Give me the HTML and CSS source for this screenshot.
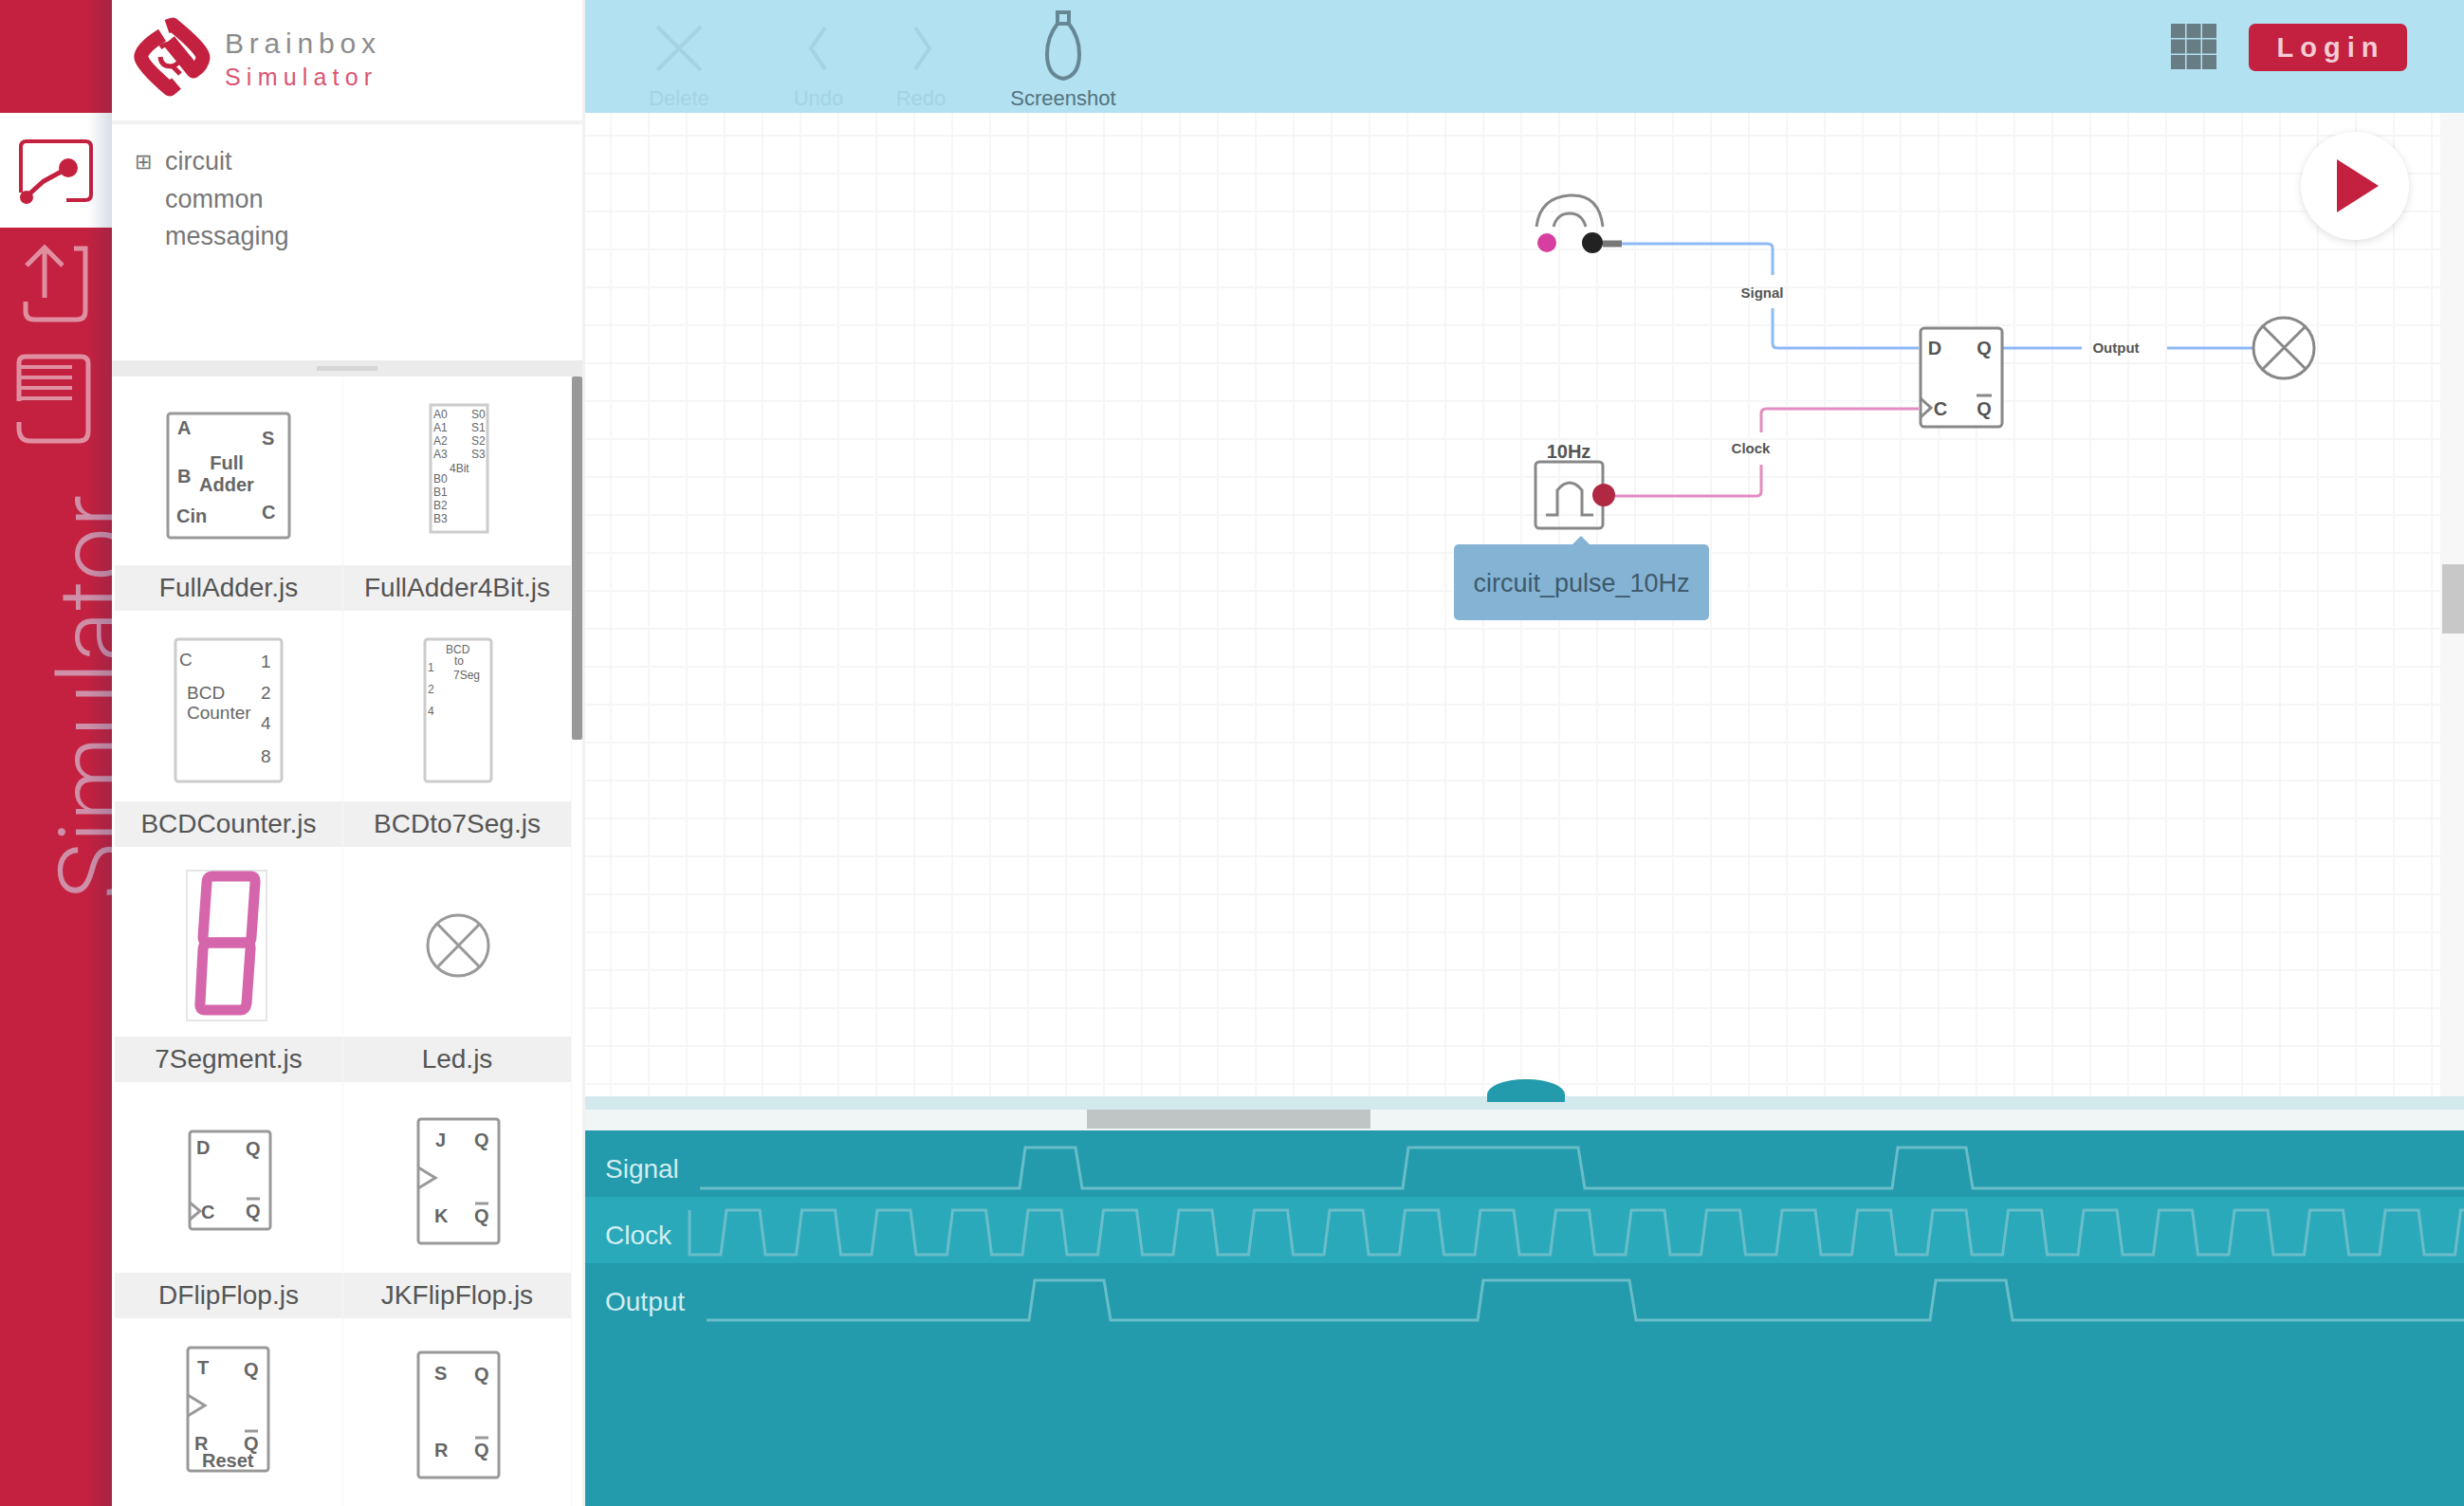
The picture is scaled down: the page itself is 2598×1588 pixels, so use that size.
FILE: index.html
```html
<!DOCTYPE html>
<html lang="en">
<head>
<meta charset="utf-8">
<title>Brainbox Simulator</title>
<link rel="stylesheet" href="styles.css">
</head>
<body>
<div class="app">
  <nav class="rail">
    <div class="rail-top"></div>
    <div class="tab active">
      <svg viewBox="0 0 118 121" fill="none" stroke="#c3213f" stroke-width="4"><path d="M22 84V36q0-6 6-6h62q6 0 6 6v50q0 6-6 6H70"/><path d="M26 90 46 72l26-14" stroke-width="5"/><circle cx="72" cy="58" r="8" fill="#c3213f"/><circle cx="28" cy="89" r="5" fill="#c3213f"/></svg>
    </div>
    <div class="tab">
      <svg viewBox="0 0 118 121" fill="none" stroke="#e08fa1" stroke-width="5"><path d="M78 22h12v66q0 9-9 9H36q-9 0-9-9V78"/><path d="M47 74V22M28 40l19-19 19 19"/></svg>
    </div>
    <div class="tab">
      <svg viewBox="0 0 118 121" fill="none" stroke="#e08fa1" stroke-width="5"><path d="M20 62V21q0-6 7-6h58q8 0 8 7v72q0 10-10 10H32q-12 0-12-14V84"/><path d="M20 26h56M20 37h56M20 48h56M20 59h56" stroke-width="4"/></svg>
    </div>
    <div class="rail-title"><span>Simulator</span></div>
  </nav>

  <aside class="palette">
    <header class="brand">
      <svg class="logo" viewBox="0 0 84 90"><g fill="none" stroke="#c3213f" stroke-width="15" stroke-linejoin="round"><path d="M32 22Q8 37 10 46T40 79L47 73"/><path d="M37 13 43 11Q76 38 75 46T65 60L39 28"/></g><path d="M30 35q13-9 19 4t-8 16q-10 0-11-10M42 54l9 9" fill="none" stroke="#c3213f" stroke-width="5"/></svg>
      <div class="brand-text"><b>Brainbox</b><i>Simulator</i></div>
    </header>
    <ul class="tree">
      <li><span class="mark">⊞</span>circuit</li>
      <li><span class="mark"></span>common</li>
      <li><span class="mark"></span>messaging</li>
    </ul>
    <div class="splitter"><span></span></div>
    <div class="parts">
      <div class="grid">
        <figure><svg viewBox="0 0 241 199"><rect x="56" y="39" width="128" height="131" rx="3"/><g class="pin"><text x="66" y="61">A</text><text x="66" y="112">B</text><text x="65" y="154">Cin</text><text x="155" y="72">S</text><text x="155" y="150">C</text><text x="118" y="98" text-anchor="middle">Full</text><text x="118" y="121" text-anchor="middle">Adder</text></g></svg><figcaption>FullAdder.js</figcaption></figure>
        <figure><svg viewBox="0 0 241 199"><rect class="soft" x="92" y="30" width="60" height="134"/><g class="tiny"><text x="95" y="44">A0</text><text x="95" y="58">A1</text><text x="95" y="72">A2</text><text x="95" y="86">A3</text><text x="95" y="112">B0</text><text x="95" y="126">B1</text><text x="95" y="140">B2</text><text x="95" y="154">B3</text><text x="135" y="44">S0</text><text x="135" y="58">S1</text><text x="135" y="72">S2</text><text x="135" y="86">S3</text><text x="112" y="101">4Bit</text></g></svg><figcaption>FullAdder4Bit.js</figcaption></figure>
        <figure><svg viewBox="0 0 241 199"><rect class="soft" x="64" y="28" width="112" height="150" rx="3"/><g class="small"><text x="68" y="56">C</text><text x="76" y="91">BCD</text><text x="76" y="112">Counter</text><text x="154" y="58">1</text><text x="154" y="91">2</text><text x="154" y="123">4</text><text x="154" y="158">8</text></g></svg><figcaption>BCDCounter.js</figcaption></figure>
        <figure><svg viewBox="0 0 241 199"><rect class="soft" x="86" y="28" width="70" height="150" rx="3"/><g class="tiny"><text x="108" y="43">BCD</text><text x="117" y="55">to</text><text x="116" y="70">7Seg</text><text x="89" y="62">1</text><text x="89" y="85">2</text><text x="89" y="108">4</text></g></svg><figcaption>BCDto7Seg.js</figcaption></figure>
        <figure><svg viewBox="0 0 241 199"><rect class="faint" x="76" y="24" width="84" height="158"/><g class="seg"><path d="M103 30h40q6 0 5 7l-4 57q0 6-6 6H99q-6 0-6-6l4-57q0-7 6-7z"/><path d="M99 100h39q6 0 5 7l-4 57q-1 7-7 7H95q-6 0-5-7l3-57q1-7 6-7z"/></g></svg><figcaption>7Segment.js</figcaption></figure>
        <figure><svg viewBox="0 0 241 199"><circle cx="121" cy="103" r="32"/><path d="m99 80 45 46m0-46-45 46"/></svg><figcaption>Led.js</figcaption></figure>
        <figure><svg viewBox="0 0 241 199"><rect x="79" y="50" width="85" height="103" rx="3"/><g class="pin"><text x="86" y="74">D</text><text x="138" y="75">Q</text><text x="91" y="142">C</text><text x="138" y="141">Q</text></g><path d="m79 125 11 9-11 9M139 121h14"/></svg><figcaption>DFlipFlop.js</figcaption></figure>
        <figure><svg viewBox="0 0 241 199"><rect x="79" y="37" width="85" height="131" rx="3"/><g class="pin"><text x="97" y="66">J</text><text x="96" y="146">K</text><text x="138" y="66">Q</text><text x="138" y="146">Q</text></g><path d="m79 88 18 11-18 11M139 126h14"/></svg><figcaption>JKFlipFlop.js</figcaption></figure>
        <figure><svg viewBox="0 0 241 199"><rect x="77" y="30" width="85" height="130" rx="3"/><g class="pin"><text x="87" y="58">T</text><text x="136" y="60">Q</text><text x="84" y="138">R</text><text x="136" y="138">Q</text><text x="92" y="156">Reset</text></g><path d="m77 80 18 11-18 11M137 118h14"/></svg></figure>
        <figure><svg viewBox="0 0 241 199"><rect x="79" y="35" width="85" height="132" rx="3"/><g class="pin"><text x="96" y="64">S</text><text x="96" y="145">R</text><text x="138" y="65">Q</text><text x="138" y="145">Q</text></g><path d="M139 125h14"/></svg></figure>
      </div>
      <div class="bar"><span></span></div>
    </div>
  </aside>

  <main class="main">
    <header class="toolbar">
      <div class="tool off w1"><svg viewBox="0 0 84 90"><path d="m19 27 46 46m0-46L19 73"/></svg><span>Delete</span></div>
      <div class="tool off w2"><svg viewBox="0 0 84 90"><path d="M49 28 34 50l15 22"/></svg><span>Undo</span></div>
      <div class="tool off w3"><svg viewBox="0 0 84 90"><path d="m36 28 15 22-15 22"/></svg><span>Redo</span></div>
      <div class="tool w4"><svg viewBox="0 0 84 90"><path d="M36 12h12v12q11 14 11 32 0 23-17 26-17-3-17-26 0-18 11-32zM34 24h16"/></svg><span>Screenshot</span></div>
      <div class="spacer"></div>
      <svg class="apps" viewBox="0 0 48 48"><path d="M0 0h15v15H0zM16.5 0h15v15h-15zM33 0h15v15H33zM0 16.5h15v15H0zM16.5 16.5h15v15h-15zM33 16.5h15v15H33zM0 33h15v15H0zM16.5 33h15v15h-15zM33 33h15v15H33z" fill="#687c84"/></svg>
      <button class="login">Login</button>
    </header>
    <section class="canvas">
      <svg class="diagram" viewBox="617 118 1956 1037">
        <g fill="none" stroke-width="3">
          <path stroke="#8db9f7" d="M1700 256h164q5 0 5 5v28M1869 324v37q0 5 5 5h149M2112 366h83M2285 366h91"/>
          <path stroke="#e48cc0" d="M1692 522h160q5 0 5-5v-28M1857 455v-20q0-5 5-5h161"/>
        </g>
        <g class="node">
          <path d="M1620 238q4-31 35-33t35 33M1638 238q4-14 17-14t17 14"/>
          <path d="M1690 256h20" stroke-width="7" stroke="#777"/>
          <circle cx="1631" cy="255" r="10" fill="#d63f9f" stroke="none"/><circle cx="1679" cy="255" r="11" fill="#222" stroke="none"/>
          <rect x="1619" y="486" width="71" height="70" rx="4"/><path d="M1630 542h12v-26q13-16 26 0v26h12"/>
          <circle cx="1691" cy="521" r="12" fill="#b02842" stroke="none"/>
          <rect x="2025" y="345" width="86" height="104" rx="4" fill="#fff"/>
          <path d="m2025 419 11 10-11 10M2084 416h16"/>
          <circle cx="2408" cy="366" r="32" fill="#fff"/><path d="m2386 343 45 45m0-45-45 45"/>
        </g>
        <g class="wire-text"><text x="1858" y="313">Signal</text><text x="1846" y="477">Clock</text><text x="2231" y="371">Output</text><text x="1654" y="482" class="hz">10Hz</text><text x="2040" y="373" class="hz">D</text><text x="2092" y="373" class="hz">Q</text><text x="2046" y="437" class="hz">C</text><text x="2092" y="437" class="hz">Q</text></g>
      </svg>
      <div class="tip">circuit_pulse_10Hz</div>
      <div class="play"><svg viewBox="0 0 114 114"><path d="M38 29v56l44-28z" fill="#c3213f"/></svg></div>
      <div class="vbar"><span></span></div>
      <div class="handle"></div>
    </section>
    <div class="divider"></div>
    <div class="hbar"><span></span></div>
    <section class="scope">
      <div class="wave"><label>Signal</label><svg viewBox="617 1192 1981 70"><path d="M738 1253H1075L1081 1210H1134L1141 1253H1479L1485 1210H1664L1671 1253H1995L2001 1210H2073L2080 1253H2598"/></svg></div>
      <div class="wave alt"><label>Clock</label><svg viewBox="617 1262 1981 70"><path id="clock" d=""/></svg></div>
      <div class="wave"><label>Output</label><svg viewBox="617 1332 1981 70"><path d="M745 1392H1085L1091 1350H1164L1171 1392H1558L1564 1350H1718L1725 1392H2035L2041 1350H2115L2122 1392H2598"/></svg></div>
    </section>
  </main>
</div>
<script src="scope.js"></script>
</body>
</html>
```
FILE: scope.js
```js
let d = "M727 1276V1323";
for (let x = 763; x < 2600; x += 79.5) d += `H${x - 3}L${x + 3} 1276H${x + 38}L${x + 44} 1323`;
document.getElementById("clock").setAttribute("d", d);
```
FILE: styles.css
```css
* { box-sizing: border-box; }
body { margin: 0; font-family: "Liberation Sans", Arial, sans-serif; font-size: 27px; color: #777; background: #fff; }
.app { display: grid; grid-template-columns: 118px 499px 1fr; width: 2598px; height: 1588px; overflow: hidden; }

.rail { position: relative; display: flex; flex-direction: column; background: #c3213f; overflow: hidden; }
.rail::after { content: ""; position: absolute; inset: 0 0 0 auto; width: 26px; background: linear-gradient(90deg, rgba(10,50,100,0), rgba(10,50,100,.16)); }
.rail-top { height: 119px; }
.tab { height: 121px; }
.tab.active { background: #fff; }
.tab svg { display: block; width: 118px; height: 121px; }
.rail-title { flex: 1; padding: 40px 0 0 41px; }
.rail-title span { display: block; writing-mode: vertical-rl; transform: rotate(180deg); width: 116px; font: 300 101px/116px Roboto, sans-serif; color: #cf8fa8; }

.palette { display: flex; flex-direction: column; min-width: 0; height: 1588px; border-right: 3px solid #f1f1f1; }
.brand { display: flex; height: 131px; padding: 15px 0 0 21px; gap: 14px; border-bottom: 4px solid #f2f2f2; }
.logo { width: 84px; height: 90px; }
.brand-text { display: flex; flex-direction: column; padding-top: 15px; gap: 3px; line-height: 32px; }
.brand-text b { font-weight: 400; font-size: 30px; letter-spacing: 5.8px; color: #8c8c8c; }
.brand-text i { font-style: normal; font-size: 25px; letter-spacing: 6.2px; color: #dc5472; }
.tree { list-style: none; margin: 0; padding: 20px 0 0 24px; height: 249px; line-height: 39.7px; }
.tree li { display: flex; }
.mark { width: 32px; font-size: 22px; }
.splitter { display: flex; justify-content: center; align-items: center; height: 17px; background: #ebebeb; }
.splitter span { width: 64px; height: 5px; background: #d6d6d6; }
.parts { display: flex; flex: 1; min-height: 0; overflow: hidden; }
.grid { display: grid; grid-template-columns: 241px 241px; grid-auto-rows: 248.5px; flex: none; padding-left: 3px; width: 485px; }
.grid figure { margin: 0; border-right: 1px solid #f7f7f7; }
.grid svg { display: block; width: 241px; height: 199px; fill: none; stroke: #999; stroke-width: 3; }
.grid svg .soft { stroke: #ccc; }
.grid svg .faint { stroke: #e6e6e6; stroke-width: 2; }
.grid svg text { fill: #666; stroke: none; }
.pin { font-size: 20px; font-weight: bold; }
.small { font-size: 19px; }
.tiny { font-size: 12px; }
.seg { stroke: #d566ac; stroke-width: 11; }
figcaption { height: 48px; line-height: 48px; text-align: center; background: #f0f0f0; color: #555; font-size: 28px; }
.bar { flex: 1; }
.bar span { display: block; width: 11px; height: 383px; background: #999; border-radius: 2px; }

.main { display: flex; flex-direction: column; min-width: 0; }
.toolbar { display: flex; height: 119px; padding-right: 60px; background: #b2e1f1; }
.tool { display: flex; flex-direction: column; align-items: center; font-size: 22px; color: #53737e; }
.tool svg { width: 84px; height: 92px; fill: none; stroke: #668894; stroke-width: 4; }
.tool span { line-height: 24px; }
.off { color: #a5d3e4; }
.off svg { stroke: #a5d3e4; }
.w1 { width: 100px; margin-left: 49px; }
.w2 { width: 100px; margin-left: 47px; }
.w3 { width: 100px; margin-left: 8px; }
.w4 { width: 120px; margin-left: 40px; }
.spacer { flex: 1; }
.apps { width: 48px; height: 48px; margin: 25px 34px 0 0; }
.login { width: 167px; height: 50px; margin-top: 25px; padding: 0; border: 0; border-radius: 7px; background: #c3213f; color: #f3ccd5; font: bold 29px/50px "Liberation Sans", Arial, sans-serif; letter-spacing: 7px; text-indent: 6px; }

.canvas { position: relative; height: 1037px; padding-right: 25px; background-image: linear-gradient(#f6f6f6 2px, transparent 2px), linear-gradient(90deg, #f6f6f6 2px, transparent 2px); background-size: 40px 40px; background-position: 26px 23px; }
.diagram { display: block; width: 1956px; height: 1037px; }
.node { fill: none; stroke: #888; stroke-width: 3; }
.wire-text { font-size: 15px; font-weight: bold; fill: #555; text-anchor: middle; }
.wire-text .hz { font-size: 20px; }
.tip { position: absolute; left: 916px; top: 455px; width: 269px; height: 80px; line-height: 82px; border-radius: 5px; background: #84b3d4; color: #3e5a6b; text-align: center; font-size: 27px; }
.tip::before { content: ""; position: absolute; left: 124px; top: -9px; border: 10px solid transparent; border-top: 0; border-bottom-color: #84b3d4; }
.play { position: absolute; left: 1809px; top: 20px; width: 114px; height: 114px; border-radius: 50%; background: #fff; box-shadow: 0 2px 9px rgba(0,0,0,.13); }
.vbar { position: absolute; right: 0; top: 0; width: 25px; height: 100%; padding-top: 476px; background: #f7f7f7; }
.vbar span { display: block; width: 23px; height: 73px; margin-left: 2px; background: #c8c8c8; }
.handle { position: absolute; left: 951px; bottom: -6px; width: 82px; height: 24px; border-radius: 40px 40px 0 0 / 16px 16px 0 0; background: #239bad; }
.divider { height: 14px; background: #d3e9ec; }
.hbar { height: 22px; background: #f0f5f5; }
.hbar span { display: block; width: 299px; height: 20px; margin-left: 529px; background: #bfc5c5; }
.scope { flex: 1; background: #239bad; }
.wave { position: relative; height: 70px; }
.alt { background: #2aa9ba; }
.wave label { position: absolute; left: 21px; top: 24px; line-height: 34px; font-size: 28px; color: #d2edf0; }
.wave svg { display: block; width: 1981px; height: 70px; fill: none; stroke: #69bdc8; stroke-width: 3; }
```
